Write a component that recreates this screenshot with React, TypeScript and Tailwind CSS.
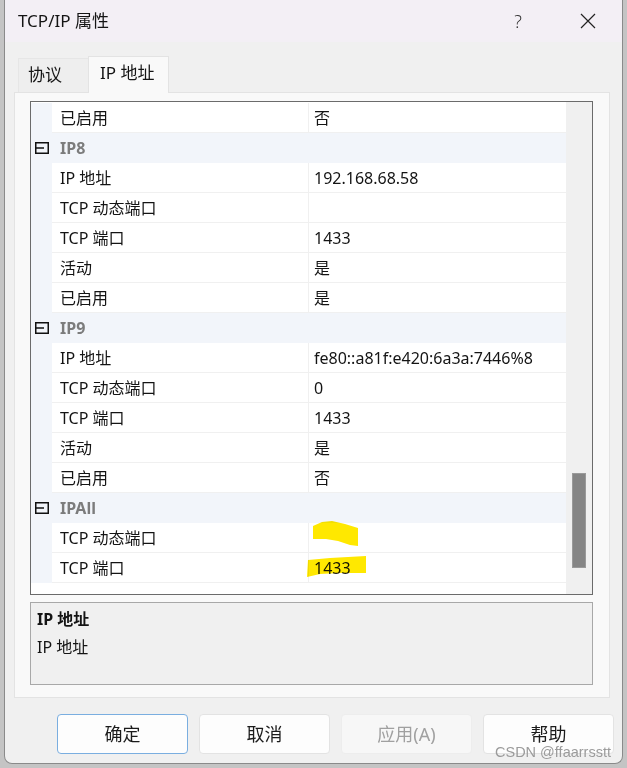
type Row =
  | { kind: 'prop'; name: string; value: string }
  | { kind: 'cat'; name: string }

const rows: Row[] = [
  { kind: 'prop', name: '已启用', value: '否' },
  { kind: 'cat', name: 'IP8' },
  { kind: 'prop', name: 'IP 地址', value: '192.168.68.58' },
  { kind: 'prop', name: 'TCP 动态端口', value: '' },
  { kind: 'prop', name: 'TCP 端口', value: '1433' },
  { kind: 'prop', name: '活动', value: '是' },
  { kind: 'prop', name: '已启用', value: '是' },
  { kind: 'cat', name: 'IP9' },
  { kind: 'prop', name: 'IP 地址', value: 'fe80::a81f:e420:6a3a:7446%8' },
  { kind: 'prop', name: 'TCP 动态端口', value: '0' },
  { kind: 'prop', name: 'TCP 端口', value: '1433' },
  { kind: 'prop', name: '活动', value: '是' },
  { kind: 'prop', name: '已启用', value: '否' },
  { kind: 'cat', name: 'IPAll' },
  { kind: 'prop', name: 'TCP 动态端口', value: '' },
  { kind: 'prop', name: 'TCP 端口', value: '1433' },
]

function MinusBox() {
  return (
    <svg width="14" height="12" viewBox="0 0 14 12" className="shrink-0">
      <rect x="0.75" y="0.75" width="12.5" height="10.5" fill="none" stroke="#111" strokeWidth="1.5" />
      <line x1="0.75" y1="6" x2="9" y2="6" stroke="#111" strokeWidth="1.5" />
    </svg>
  )
}

function GridRow({ row }: { row: Row }) {
  if (row.kind === 'cat') {
    return (
      <div className="h-[30px] flex items-center bg-[#f2f5fa]">
        <div className="w-[29px] pl-[4px] flex items-center">
          <MinusBox />
        </div>
        <span className="font-bold text-[#7c7c7c]">{row.name}</span>
      </div>
    )
  }
  return (
    <div className="h-[30px] flex">
      <div className="w-[21px] bg-[#f2f5fa]" />
      <div className="w-[257px] pl-[8px] flex items-center border-b border-r border-[#f0f0f0] bg-white">
        {row.name}
      </div>
      <div className="flex-1 pl-[5px] flex items-center border-b border-[#f0f0f0] bg-white">
        {row.value}
      </div>
    </div>
  )
}

function Button({ label, primary, disabled }: { label: string; primary?: boolean; disabled?: boolean }) {
  return (
    <div
      className={
        primary
          ? 'w-[131px] h-[40px] rounded-[4px] border border-[#7aaee0] bg-[#fdfdfd] flex items-center justify-center text-[18px] text-[#1b1b1b]'
          : disabled
            ? 'w-[131px] h-[40px] rounded-[4px] border border-[#ededed] bg-[#f7f7f7] flex items-center justify-center text-[18px] text-[#a0a0a0]'
            : 'w-[131px] h-[40px] rounded-[4px] border border-[#e3e3e3] bg-[#fdfdfd] flex items-center justify-center text-[18px] text-[#1b1b1b]'
      }
    >
      <span className="leading-none">{label}</span>
    </div>
  )
}

export default function App() {
  return (
    <div className="relative w-[627px] h-[768px] bg-[#c4c4c4] pl-[4px] font-['Noto_Sans','Noto_Sans_CJK_SC',sans-serif] text-[16px] text-[#141414] overflow-hidden">
      <div className="w-[619px] h-[764px] border-x border-b border-[#8a8a8a] rounded-b-[8px] bg-[#f0f0f0] flex flex-col overflow-hidden">

        {/* title bar */}
        <div className="h-[42px] shrink-0 bg-[#f3eff5] flex items-center pl-[13px] pr-[26px]">
          <span className="text-[17px]">TCP/IP 属性</span>
          <span className="ml-auto text-[18px] font-light text-[#333]">?</span>
          <svg width="16" height="16" viewBox="0 0 16 16" className="ml-[58px]">
            <path d="M1 1L15 15M15 1L1 15" stroke="#222" strokeWidth="1.2" />
          </svg>
        </div>

        {/* body */}
        <div className="pl-[9px] pr-[12px] pt-[13px]">
          <div className="h-[37px] flex items-end pl-[4px]">
            <div className="w-[70px] h-[34px] border-l border-t border-[#e6e6e6] bg-[#eeeeee] pl-[9px] pt-[3px] text-[17px]">
              协议
            </div>
            <div className="w-[81px] h-[37px] -mb-[1px] relative border-x border-t border-[#e3e3e3] bg-[#f9f9f9] pl-[11px] pt-[3px] text-[17px]">
              IP 地址
            </div>
          </div>

          <div className="h-[606px] border border-[#e3e3e3] bg-[#f9f9f9] pl-[15px] pt-[8px]">
            {/* property grid */}
            <div className="w-[563px] h-[494px] border border-[#6b6b6b] bg-white flex">
              <div className="w-[535px] pt-[1px]">
                {rows.map((r, i) => (
                  <GridRow key={i} row={r} />
                ))}
              </div>
              <div className="w-[26px] bg-[#f0f0f0] pl-[6px] pt-[371px]">
                <div className="w-[14px] h-[95px] bg-[#858585] border border-[#9a9a9a]" />
              </div>
            </div>

            {/* description */}
            <div className="mt-[7px] w-[563px] h-[83px] border border-[#a8a8a8] bg-[#f0f0f0] pl-[6px] pt-[2px] leading-[28px]">
              <div className="font-bold">IP 地址</div>
              <div>IP 地址</div>
            </div>
          </div>
        </div>

        {/* buttons */}
        <div className="mt-[16px] flex justify-end gap-[11px] pr-[8px]">
          <Button label="确定" primary />
          <Button label="取消" />
          <Button label="应用(A)" disabled />
          <Button label="帮助" />
        </div>
      </div>

      {/* marker highlights */}
      <svg width="627" height="768" viewBox="0 0 627 768" className="absolute left-0 top-0 pointer-events-none mix-blend-multiply">
        <polygon points="313,526 322,522 332,521 345,524 358,528 358,546 350,545 338,541 326,539 313,539" fill="#ffe800" />
        <polygon points="308,560 330,558 366,556 366,573 340,573 320,574 307,577" fill="#ffe800" />
      </svg>

      {/* watermark */}
      <div className="absolute left-[495px] top-[744px] text-[14.5px] leading-[16px] text-[#9b9b9b] font-['Liberation_Sans',sans-serif]">
        CSDN @ffaarrsstt
      </div>
    </div>
  )
}
